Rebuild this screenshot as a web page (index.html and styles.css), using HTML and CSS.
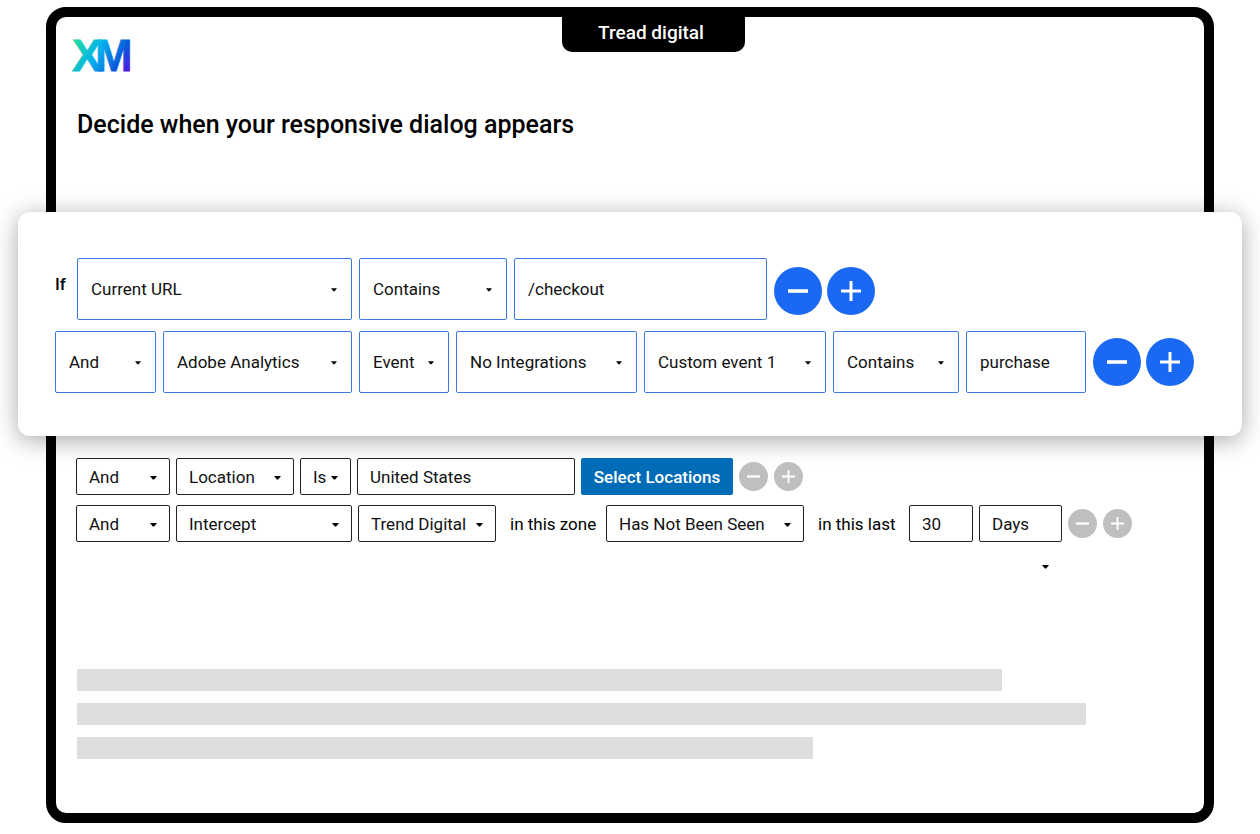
FILE: index.html
```html
<!DOCTYPE html>
<html lang="en">
<head>
<meta charset="utf-8">
<meta name="viewport" content="width=device-width, initial-scale=1">
<title>Tread digital</title>
<link rel="stylesheet" href="styles.css">
</head>
<body>
<svg class="defs" width="0" height="0" aria-hidden="true">
  <symbol id="caret" viewBox="0 0 7 4"><path d="M0 0h7L4.2 3.6h-1.4z"/></symbol>
  <symbol id="minus" viewBox="0 0 20 20"><path d="M0 10h20" stroke="currentColor" stroke-width="3.6"/></symbol>
  <symbol id="plus" viewBox="0 0 20 20"><path d="M0 10h20M10 0v20" stroke="currentColor" stroke-width="3"/></symbol>
</svg>
<main class="frame">
  <header class="header">
    <svg class="logo" viewBox="0 0 60 34" role="img" aria-label="XM">
      <defs>
        <linearGradient id="brand" gradientUnits="userSpaceOnUse" x1="4" y1="0" x2="60" y2="30">
          <stop offset="0" stop-color="#21dba0"/>
          <stop offset="0.4" stop-color="#05b0ee"/>
          <stop offset="0.75" stop-color="#0a5bdc"/>
          <stop offset="1" stop-color="#5f0be8"/>
        </linearGradient>
      </defs>
      <text class="logo-letters" x="0" y="32">X<tspan dx="-7">M</tspan></text>
    </svg>
    <div class="tab">Tread digital</div>
  </header>
  <h1 class="title">Decide when your responsive dialog appears</h1>

  <section class="card" aria-label="Main conditions">
    <div class="rule rule-url">
      <span class="if">If</span>
      <span class="picker"><select class="field" aria-label="Source"><option>Current URL</option></select><svg class="caret"><use href="#caret"/></svg></span>
      <span class="picker"><select class="field" aria-label="Operator"><option>Contains</option></select><svg class="caret"><use href="#caret"/></svg></span>
      <input class="field" type="text" value="/checkout" aria-label="URL text">
      <span class="actions"><button class="round" aria-label="Remove condition"><svg class="sign"><use href="#minus"/></svg></button><button class="round" aria-label="Add condition"><svg class="sign"><use href="#plus"/></svg></button></span>
    </div>
    <div class="rule rule-event">
      <span class="picker"><select class="field" aria-label="Joiner"><option>And</option></select><svg class="caret"><use href="#caret"/></svg></span>
      <span class="picker"><select class="field" aria-label="Source"><option>Adobe Analytics</option></select><svg class="caret"><use href="#caret"/></svg></span>
      <span class="picker"><select class="field" aria-label="Type"><option>Event</option></select><svg class="caret"><use href="#caret"/></svg></span>
      <span class="picker"><select class="field" aria-label="Integration"><option>No Integrations</option></select><svg class="caret"><use href="#caret"/></svg></span>
      <span class="picker"><select class="field" aria-label="Event name"><option>Custom event 1</option></select><svg class="caret"><use href="#caret"/></svg></span>
      <span class="picker"><select class="field" aria-label="Operator"><option>Contains</option></select><svg class="caret"><use href="#caret"/></svg></span>
      <input class="field" type="text" value="purchase" aria-label="Event text">
      <span class="actions"><button class="round" aria-label="Remove condition"><svg class="sign"><use href="#minus"/></svg></button><button class="round" aria-label="Add condition"><svg class="sign"><use href="#plus"/></svg></button></span>
    </div>
  </section>

  <section class="more" aria-label="More conditions">
    <div class="rule rule-location">
      <span class="picker"><select class="field" aria-label="Joiner"><option>And</option></select><svg class="caret"><use href="#caret"/></svg></span>
      <span class="picker"><select class="field" aria-label="Source"><option>Location</option></select><svg class="caret"><use href="#caret"/></svg></span>
      <span class="picker"><select class="field" aria-label="Operator"><option>Is</option></select><svg class="caret"><use href="#caret"/></svg></span>
      <input class="field" type="text" value="United States" aria-label="Location">
      <button class="select-locations">Select Locations</button>
      <span class="actions"><button class="round" aria-label="Remove condition"><svg class="sign"><use href="#minus"/></svg></button><button class="round" aria-label="Add condition"><svg class="sign"><use href="#plus"/></svg></button></span>
    </div>
    <div class="rule rule-intercept">
      <span class="picker"><select class="field" aria-label="Joiner"><option>And</option></select><svg class="caret"><use href="#caret"/></svg></span>
      <span class="picker"><select class="field" aria-label="Source"><option>Intercept</option></select><svg class="caret"><use href="#caret"/></svg></span>
      <span class="picker"><select class="field" aria-label="Intercept name"><option>Trend Digital</option></select><svg class="caret"><use href="#caret"/></svg></span>
      <span class="words">in this zone</span>
      <span class="picker"><select class="field" aria-label="State"><option>Has Not Been Seen</option></select><svg class="caret"><use href="#caret"/></svg></span>
      <span class="words">in this last</span>
      <input class="field" type="text" value="30" aria-label="Amount">
      <select class="field" aria-label="Unit"><option>Days</option></select>
      <span class="actions"><button class="round" aria-label="Remove condition"><svg class="sign"><use href="#minus"/></svg></button><button class="round" aria-label="Add condition"><svg class="sign"><use href="#plus"/></svg></button></span>
      <svg class="caret unit-caret"><use href="#caret"/></svg>
    </div>
  </section>

  <div class="lines" aria-hidden="true">
    <div class="line line-long"></div>
    <div class="line line-full"></div>
    <div class="line line-short"></div>
  </div>
</main>
</body>
</html>
```
FILE: styles.css
```css
* { box-sizing: border-box; }

body {
  margin: 0;
  padding: 7px 46px 11px;
  background: #fff;
  color: #000;
  font-family: Roboto, "Liberation Sans", sans-serif;
  font-size: 17px;
  line-height: 22px;
}

.defs { display: block; }

.frame {
  border: 10px solid #000;
  border-radius: 20px;
  padding-bottom: 54px;
}

.header {
  display: grid;
  grid-template-columns: 506fr auto 459fr;
  align-items: start;
}

.logo {
  width: 60px;
  height: 34px;
  margin: 22px 0 0 16px;
  overflow: visible;
}

.logo-letters {
  font-family: "Liberation Sans", sans-serif;
  font-size: 45px;
  font-weight: 700;
  fill: url(#brand);
  stroke: url(#brand);
  stroke-width: 0.8;
}

.tab {
  padding: 4px 41px 7px 36px;
  border-radius: 0 0 10px 10px;
  background: #000;
  color: #fff;
  font-size: 19px;
  font-weight: 500;
  line-height: 24px;
}

.title {
  margin: 37px 21px 0;
  font-size: 25px;
  font-weight: 500;
  line-height: 30px;
}

.card {
  display: grid;
  gap: 11px;
  margin: 72px -38px 0;
  padding: 46px 48px 43px 37px;
  border-radius: 12px;
  background: #fff;
  box-shadow: 0 4px 24px rgba(0, 0, 0, 0.35);
}

.rule {
  display: grid;
  align-items: center;
}

.card .rule { gap: 7px; }
.rule-url { grid-template-columns: 15px 275fr 148fr 253fr 101px 312fr; }
.rule-event { grid-template-columns: 101fr 189fr 90fr 181fr 182fr 126fr 120fr 101px; }
.rule-url .actions { padding-top: 4px; }

.more {
  display: grid;
  gap: 10px;
  padding: 22px 72px 0 20px;
}

.more .rule { column-gap: 6px; }
.rule-location { grid-template-columns: 94fr 118fr 51fr 218fr 152fr 64px 323fr; }
.rule-intercept { grid-template-columns: 94fr 176fr 138fr 98fr 198fr 93fr 64fr 83fr 64px; }

.if {
  padding-bottom: 10px;
  font-weight: 500;
}

.picker { display: grid; }
.picker > * { grid-area: 1 / 1; }

.field {
  width: 100%;
  min-width: 0;
  margin: 0;
  height: 62px;
  padding: 0 13px;
  border: 1px solid #3b7be0;
  border-radius: 2px;
  background: #fff;
  color: #111;
  font: inherit;
  appearance: none;
}

.more .field {
  height: 37px;
  padding: 0 12px;
  border-color: #222;
}

.caret {
  width: 6px;
  height: 4px;
  align-self: center;
  justify-self: end;
  margin: 2px 15px 0 0;
  pointer-events: none;
}

.more .caret {
  width: 7px;
  margin-right: 13px;
}

.actions {
  display: flex;
  justify-content: space-between;
}

.round {
  display: grid;
  place-items: center;
  width: 48px;
  height: 48px;
  padding: 0;
  border: 0;
  border-radius: 50%;
  background: #1b69f2;
  color: #fff;
}

.sign {
  width: 20px;
  height: 20px;
}

.more .round {
  width: 29px;
  height: 29px;
  background: #bfbfbf;
}

.more .sign {
  width: 13px;
  height: 13px;
}

.select-locations {
  height: 37px;
  padding: 0;
  border: 0;
  border-radius: 2px;
  background: #006cb7;
  color: #fff;
  font: inherit;
  font-weight: 500;
  white-space: nowrap;
}

.words {
  padding-left: 8px;
  white-space: nowrap;
}

.more .unit-caret {
  grid-area: 2 / 8;
  margin-top: 23px;
}

.lines {
  display: grid;
  gap: 12px;
  margin: 100px 76px 0 21px;
}

.line {
  height: 22px;
  border-radius: 1px;
  background: #dedede;
}

.line-long { width: 88%; }
.line-full { width: 96%; }
.line-short { width: 70%; }
```
